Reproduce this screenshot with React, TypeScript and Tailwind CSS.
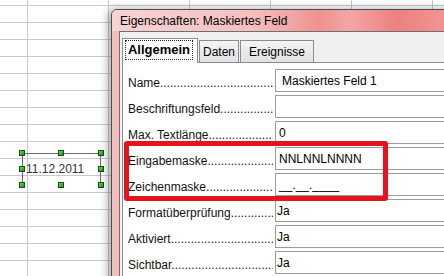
import React from 'react'

const ROW_COUNT = 17
const COL_COUNT = 7

const FIELDS: { label: string; value: string; pad: string }[] = [
  { label: 'Name', value: 'Maskiertes Feld 1', pad: 'pl-[6px]' },
  { label: 'Beschriftungsfeld', value: '', pad: 'pl-[3px]' },
  { label: 'Max. Textlänge', value: '0', pad: 'pl-[3px]' },
  { label: 'Eingabemaske', value: 'NNLNNLNNNN', pad: 'pl-[3px]' },
  { label: 'Zeichenmaske', value: '__.__.____', pad: 'pl-[3px]' },
  { label: 'Formatüberprüfung', value: 'Ja', pad: 'pl-[1px]' },
  { label: 'Aktiviert', value: 'Ja', pad: 'pl-[1px]' },
  { label: 'Sichtbar', value: 'Ja', pad: 'pl-[1px]' },
]

function SheetGrid() {
  return (
    <div className="flex flex-col">
      {Array.from({ length: ROW_COUNT }).map((_, r) => (
        <div key={r} className={`flex ${r === 0 ? 'h-[6px]' : 'h-[17px]'}`}>
          {Array.from({ length: COL_COUNT }).map((_, c) => (
            <div
              key={c}
              className={`shrink-0 border-r border-b border-[#c9c9c9] ${c === 0 ? 'w-[28px]' : 'w-[81px]'}`}
            />
          ))}
        </div>
      ))}
    </div>
  )
}

function Handle({ pos }: { pos: string }) {
  return (
    <div
      className={`absolute w-[6px] h-[6px] border border-[#1d4d12] bg-gradient-to-br from-[#5be04a] to-[#0a9a0a] ${pos}`}
    />
  )
}

function DateField() {
  return (
    <div className="absolute left-[22px] top-[153px] w-[79px] h-[31px] border-t border-l border-r border-[#6a6a6a] border-b-[#c6c6c6] flex items-center pl-[3px] text-[12px] text-[#333] leading-none">
      11.12.2011
      <Handle pos="-left-[4px] -top-[4px]" />
      <Handle pos="left-[35px] -top-[4px]" />
      <Handle pos="-right-[4px] -top-[4px]" />
      <Handle pos="-left-[4px] top-[12px]" />
      <Handle pos="-right-[4px] top-[12px]" />
      <Handle pos="-left-[4px] -bottom-[4px]" />
      <Handle pos="left-[35px] -bottom-[4px]" />
      <Handle pos="-right-[4px] -bottom-[4px]" />
    </div>
  )
}

function Tabs() {
  return (
    <div className="flex items-end h-[24px] text-[12px] text-black">
      <div className="relative z-10 w-[76px] h-[25px] -mb-px bg-white border-l border-t border-r border-[#898c95] pt-[1px] pl-[2px]">
        <div className="w-[68px] h-[20px] border border-dotted border-[#222] flex items-center justify-center font-bold text-[13px]">
          Allgemein
        </div>
      </div>
      <div className="w-[40px] h-[22px] ml-px border-l border-t border-r border-[#898c95] bg-gradient-to-b from-[#f4f4f4] to-[#e2e2e2] flex items-center justify-center">
        Daten
      </div>
      <div className="w-[74px] h-[22px] ml-px border-l border-t border-r border-[#898c95] bg-gradient-to-b from-[#f4f4f4] to-[#e2e2e2] flex items-center justify-center">
        Ereignisse
      </div>
    </div>
  )
}

function FieldRow({ label, value, pad }: { label: string; value: string; pad: string }) {
  return (
    <div className="flex h-[23px] mb-[3px] text-[12px]">
      <div className="w-[145px] shrink-0 overflow-hidden whitespace-nowrap pt-[7px] leading-[14px] text-[#111]">
        {label}
        {'.'.repeat(60)}
      </div>
      <div className={`ml-[2px] flex-1 border border-[#9c9c9c] bg-white flex items-center whitespace-nowrap text-black ${pad}`}>
        {value}
      </div>
    </div>
  )
}

function Dialog() {
  return (
    <div className="absolute left-[111px] top-[9px] w-[350px] h-[280px] rounded-tl-[6px] border border-[#4f4f4f] bg-[#f2bebe] shadow-[-3px_0_8px_rgba(0,0,0,0.35)] flex flex-col overflow-hidden">
      <div className="h-[21px] shrink-0 pl-[8px] flex items-center text-[12px] text-black bg-[linear-gradient(to_right,#f7d3d3_0%,#f4c0c0_40%,#f09090_60%,#f3a6a6_68%,#ee8080_82%,#f39a9a_100%)]">
        Eigenschaften: Maskiertes Feld
      </div>
      <div className="flex-1 pl-[7px] flex">
        <div className="flex-1 border-l border-t border-[#6f6f6f] bg-[#f0f0f0] pt-[6px] pl-[2px] flex flex-col">
          <Tabs />
          <div className="flex-1 border-l border-t border-[#898c95] bg-white pt-[6px] pl-[5px]">
            {FIELDS.map((f) => (
              <FieldRow key={f.label} {...f} />
            ))}
          </div>
        </div>
      </div>
    </div>
  )
}

export default function App() {
  return (
    <div className="relative w-[444px] h-[276px] overflow-hidden bg-white font-['Liberation_Sans',Arial,sans-serif]">
      <SheetGrid />
      <DateField />
      <Dialog />
      {/* red highlight */}
      <div className="absolute left-[124px] top-[141px] w-[264px] h-[60px] border-[5px] border-[#e3141b] rounded-[3px]" />
    </div>
  )
}
